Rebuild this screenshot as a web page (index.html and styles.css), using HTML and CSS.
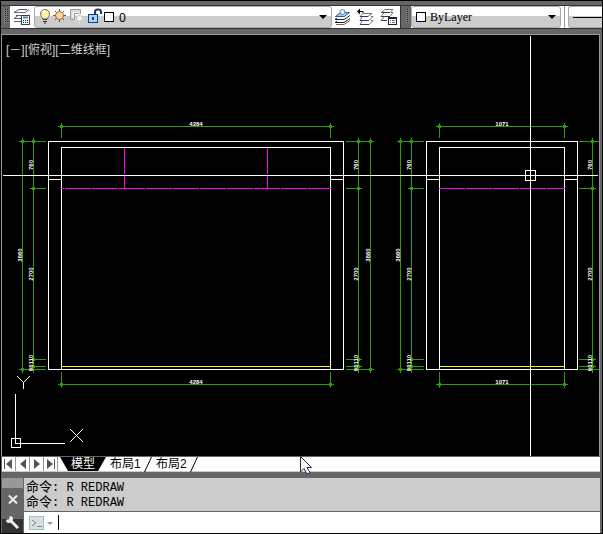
FILE: index.html
```html
<!DOCTYPE html>
<html lang="zh-CN">
<head>
    <meta charset="UTF-8">
    <meta name="viewport" content="width=device-width, initial-scale=1.0">
    <title>CAD</title>
    <link rel="stylesheet" href="styles.css">
</head>
<body>
    <div class="app">
        <div class="toolbar">
            <div class="grip"></div>
            <div class="tools">
                <button class="tool" type="button" aria-label="图层特性">
                    <svg width="18" height="18" viewBox="0 0 18 18" fill="none">
                        <path d="M6 1.5h8M4 4.5h8M3 7.5h5M3 10.5h5M3 13.5h5" stroke="#4b4f78"/>
                        <path d="M6 1.5l-5 3h11l4-3M8 7.500h-3l-4 3h6M1 13.500h6" stroke="#666"/>
                        <rect x="8.500" y="7.500" width="8" height="9" fill="#fff" stroke="#345"/>
                        <path d="M10 9.500h5" stroke="#3c82c8" stroke-width="2"/>
                        <path d="M10 12.500h1m1 0h1m1 0h1M10 14.500h1m1 0h1m1 0h1" stroke="#222"/>
                    </svg>
                </button>
            </div>
            <div class="combo combo-layer">
                <svg width="76" height="18" viewBox="0 0 76 18" fill="none">
                    <path d="M1.500 6a4.500 4.500 0 0 1 9 0c0 2-2 3-2 5h-5c0-2-2-3-2-5z" fill="#fff3a0" stroke="#776655"/>
                    <path d="M4 4l2-1" stroke="#fff" stroke-width="2"/>
                    <path d="M4 11.500h4M4 13.500h4M5 15h2" stroke="#334"/>
                    <path d="M20.500 1v13M14 7.500h13M16 3l9 9M25 3l-9 9" stroke="#555"/>
                    <circle cx="20.500" cy="7.500" r="4" fill="#ffd39b" stroke="#a86424"/>
                    <path d="M31.500 1.500h10v4h-6v6h-4z" fill="#ddd" stroke="#999"/>
                    <path d="M34 4.500h5M34 5v4" stroke="#fff"/>
                    <path d="M40.500 5v10M36 10.500h9M37 7l7 7M44 7l-7 7" stroke="#eee"/>
                    <circle cx="40.500" cy="10.500" r="3" fill="#f6f6f6" stroke="#bbb"/>
                    <path d="M56 7V4q0-2.500 2.500-2.500h1Q62 1.500 62 4v2" stroke="#1c3f66" stroke-width="2"/>
                    <rect x="49.500" y="6.500" width="9" height="8" fill="#a9d2ff" stroke="#123f82"/>
                    <path d="M54 9v3" stroke="#123f82" stroke-width="2"/>
                    <rect x="65.500" y="4.500" width="9" height="9" fill="#fff" stroke="#000"/>
                </svg>
                <select class="combo-select layer-name" aria-label="图层">
                    <option>0</option>
                </select>
                <span class="arrow"></span>
            </div>
            <div class="tools tools-wide">
                <button class="tool" type="button" aria-label="置为当前">
                    <svg width="18" height="18" viewBox="0 0 18 18" fill="none">
                        <path d="M1 14.500h9l6-4M1 11.500h9l6-4M3 10l-2 1.500M3 13l-2 1.500" stroke="#222"/>
                        <path d="M1.500 8.500l5-4h9l-5 4z" fill="#9bc8f5" stroke="#1f5fae"/>
                        <circle cx="8.500" cy="4" r="2.500" fill="#e4f0f4" stroke="#789"/>
                        <path d="M2 16.500h8l6-4" stroke="#666"/>
                    </svg>
                </button>
                <button class="tool" type="button" aria-label="上一个图层">
                    <svg width="18" height="18" viewBox="0 0 18 18" fill="none">
                        <path d="M1 3.500h5" stroke="#000"/>
                        <path d="M0 3.500l3-3v6z" fill="#000"/>
                        <path d="M5 3.500h1v2" stroke="#000"/>
                        <path d="M3 8.500l3-3h9l-4 3zM12 12.500l4-4h-2M12 16.500l4-4h-2M5 9l-2 3.500M5 13l-2 3.500" stroke="#777"/>
                        <path d="M3 8.500h8M3 12.500h9M3 16.500h9" stroke="#33386f"/>
                    </svg>
                </button>
                <button class="tool" type="button" aria-label="图层状态">
                    <svg width="18" height="18" viewBox="0 0 18 18" fill="none">
                        <path d="M1 4.500l4-3h8l-3 3zM10 8.500l3-4h-2M4 5l-3 3.500M4 9l-3 3.500" stroke="#777"/>
                        <path d="M1 4.500h9M1 8.500h9M1 12.500h6" stroke="#33386f"/>
                        <rect x="8.500" y="9.500" width="8" height="7" fill="#fff" stroke="#222"/>
                        <path d="M8 10h9" stroke="#222" stroke-width="2"/>
                        <path d="M10 12.500h1m1 0h3M10 14.500h1m1 0h3" stroke="#5f73ad"/>
                    </svg>
                </button>
            </div>
            <div class="grip grip-second"></div>
            <div class="combo combo-color">
                <span class="swatch"></span>
                <select class="combo-select" aria-label="颜色">
                    <option>ByLayer</option>
                </select>
                <span class="arrow"></span>
            </div>
            <div class="divider"></div>
            <div class="combo combo-line">
                <span class="line-sample"></span>
            </div>
        </div>

        <div class="viewport">
            <div class="view-label">[－][俯视][二维线框]</div>
            <svg class="drawing" fill="none" shape-rendering="crispEdges">
                <defs>
                    <g id="tick">
                        <path d="M-3 .5h7M.5-3v7"/>
                        <path class="tick-dot" d="M-1-1h3v3h-3z"/>
                    </g>
                </defs>
                <g transform="translate(-3 -35)">
                    <!-- front elevation -->
                    <g class="dim">
                        <path d="M61.500 126.500h269M61.500 123v15M330.500 123v15"/>
                        <path d="M61.500 384.500h269M61.500 372v15M330.500 372v15"/>
                        <path d="M22.500 139v233M33.500 139v234M20 141.500h26M31 188.500h15M31 359.500h15M31 366.500h15M20 369.500h26"/>
                        <path d="M358.500 139v234M370.500 139v233M346 141.500h26M346 188.500h15M346 359.500h15M346 366.500h15M346 369.500h26"/>
                        <use href="#tick" x="61" y="126"/><use href="#tick" x="330" y="126"/>
                        <use href="#tick" x="61" y="384"/><use href="#tick" x="330" y="384"/>
                        <use href="#tick" x="22" y="141"/><use href="#tick" x="33" y="141"/>
                        <use href="#tick" x="33" y="188"/><use href="#tick" x="33" y="359"/>
                        <use href="#tick" x="33" y="366"/><use href="#tick" x="22" y="369"/>
                        <use href="#tick" x="358" y="141"/><use href="#tick" x="370" y="141"/>
                        <use href="#tick" x="358" y="188"/><use href="#tick" x="358" y="359"/>
                        <use href="#tick" x="358" y="366"/><use href="#tick" x="370" y="369"/>
                    </g>
                    <path class="wall" d="M48.500 369.500v-228h295v228zM61.500 369v-221.500h269v221.500M48 179.500h13M330 179.500h13"/>
                    <path class="shelf" d="M65 188.500h266"/>
                    <path class="shelf" d="M61 188.500h3M124.500 148v40M267.500 148v40"/>
                    <path class="floor" d="M62 366.500h268"/>

                    <!-- side elevation -->
                    <g class="dim">
                        <path d="M439.500 126.500h125M439.500 123v15M564.500 123v15"/>
                        <path d="M439.500 384.500h125M439.500 372v15M564.500 372v15"/>
                        <path d="M400.500 139v233M411.500 139v234M398 141.500h26M409 188.500h15M409 359.500h15M409 366.500h15M398 369.500h26"/>
                        <path d="M592.500 139v234M579 141.500h20M579 188.500h16M579 359.500h16M579 366.500h16M579 369.500h20"/>
                        <use href="#tick" x="439" y="126"/><use href="#tick" x="564" y="126"/>
                        <use href="#tick" x="439" y="384"/><use href="#tick" x="564" y="384"/>
                        <use href="#tick" x="400" y="141"/><use href="#tick" x="411" y="141"/>
                        <use href="#tick" x="411" y="188"/><use href="#tick" x="411" y="359"/>
                        <use href="#tick" x="411" y="366"/><use href="#tick" x="400" y="369"/>
                        <use href="#tick" x="592" y="141"/><use href="#tick" x="592" y="188"/>
                        <use href="#tick" x="592" y="359"/><use href="#tick" x="592" y="366"/>
                    </g>
                    <path class="wall" d="M426.500 369.500v-228h151v228zM439.500 369v-221.500h125v221.500M426 179.500h13M564 179.500h13"/>
                    <path class="shelf" d="M439 188.500h126"/>
                    <path class="floor" d="M440 366.500h124"/>

                    <g class="dim-text">
                        <text x="196" y="126">4284</text>
                        <text x="196" y="384">4284</text>
                        <text x="502" y="126">1071</text>
                        <text x="502" y="384">1071</text>
                        <text transform="translate(33 165) rotate(-90)">760</text>
                        <text transform="translate(22 255) rotate(-90)">3660</text>
                        <text transform="translate(33 274) rotate(-90)">2700</text>
                        <text transform="translate(33 363) rotate(-90)">90110</text>
                        <text transform="translate(358 165) rotate(-90)">760</text>
                        <text transform="translate(370 255) rotate(-90)">3660</text>
                        <text transform="translate(358 274) rotate(-90)">2700</text>
                        <text transform="translate(358 363) rotate(-90)">90110</text>
                        <text transform="translate(411 165) rotate(-90)">760</text>
                        <text transform="translate(400 255) rotate(-90)">3660</text>
                        <text transform="translate(411 274) rotate(-90)">2700</text>
                        <text transform="translate(411 363) rotate(-90)">90110</text>
                        <text transform="translate(592 165) rotate(-90)">760</text>
                        <text transform="translate(592 274) rotate(-90)">2700</text>
                        <text transform="translate(592 363) rotate(-90)">90110</text>
                    </g>

                    <!-- UCS icon -->
                    <path class="wall" d="M15.500 394v49.500h49.500M11.500 438.500h9v9h-9z"/>
                    <path class="wall" d="M17 376l6.500 6.500l6.500-6.500M23.500 382v7M70 429l13 13M83 429l-13 13"/>

                    <!-- crosshair -->
                    <path class="wall" d="M3 175.500h595M530.500 36v420M525.500 170.500h10v10h-10z"/>
                </g>
            </svg>
        </div>

        <div class="tabs">
            <button class="nav" type="button" aria-label="第一个"><svg width="9" height="10" viewBox="0 0 9 10"><path d="M0 0h1v10H0zM8 0v10L2 5z"/></svg></button>
            <button class="nav" type="button" aria-label="上一个"><svg width="6" height="10" viewBox="0 0 6 10"><path d="M6 0v10L0 5z"/></svg></button>
            <button class="nav" type="button" aria-label="下一个"><svg width="6" height="10" viewBox="0 0 6 10"><path d="M0 0v10l6-5z"/></svg></button>
            <button class="nav" type="button" aria-label="最后一个"><svg width="9" height="10" viewBox="0 0 9 10"><path d="M8 0h1v10H8zM1 0v10l6-5z"/></svg></button>
            <button class="tab tab-active" type="button">模型</button>
            <button class="tab" type="button">布局1<svg class="slant" width="8" height="15" viewBox="0 0 8 15"><path d="M7.500 0l-7 15" stroke="#000"/></svg></button>
            <button class="tab" type="button">布局2<svg class="slant" width="8" height="15" viewBox="0 0 8 15"><path d="M7.500 0l-7 15" stroke="#000"/></svg></button>
            <svg class="pointer" width="13" height="19" viewBox="0 0 13 19">
                <path d="M.5.500v15.500l3.500-3.500l3 5.500l3-1.500l-3-5h4.500z" fill="#fff" stroke="#26264f"/>
            </svg>
        </div>

        <div class="command">
            <div class="command-side">
                <div class="side-handle"></div>
                <button class="side-button" type="button" aria-label="关闭">
                    <svg width="10" height="9" viewBox="0 0 10 9"><path d="M1 .5l8 8M9 .5l-8 8" stroke="#eee" stroke-width="2"/></svg>
                </button>
                <button class="side-button side-options" type="button" aria-label="自定义">
                    <svg width="15" height="15" viewBox="0 0 15 15" fill="none">
                        <path d="M6 6l7 7" stroke="#eee" stroke-width="3"/>
                        <path d="M5 1L3.500 4L1 5q0 3 3 3q4-1 4-4q0-3-3-3" fill="#eee"/>
                        <path d="M1 1l3 3" stroke="#666" stroke-width="2"/>
                    </svg>
                </button>
            </div>
            <div class="command-main">
                <div class="history">
                    <div class="history-line"><span class="prompt">命令</span>: R REDRAW</div>
                    <div class="history-line"><span class="prompt">命令</span>: R REDRAW</div>
                </div>
                <div class="entry">
                    <button class="recent" type="button" aria-label="最近使用的命令">
                        <svg width="24" height="14" viewBox="0 0 24 14" fill="none">
                            <rect x=".5" y=".5" width="14" height="13" fill="#ddd" stroke="#8fc9cc"/>
                            <path d="M3 4l4 3l-4 3M8 10.500h5" stroke="#789"/>
                            <path d="M18 6h6l-3 3z" fill="#999"/>
                        </svg>
                    </button>
                    <span class="caret"></span>
                    <input class="entry-input" type="text" aria-label="命令行">
                </div>
            </div>
        </div>
    </div>
</body>
</html>
```

FILE: styles.css
```css
* {
    box-sizing: border-box;
}

body {
    margin: 0;
    background: #000;
    font-family: "Liberation Sans", "Noto Sans CJK SC", sans-serif;
    font-size: 12px;
    color: #000;
}

button {
    padding: 0;
    border: 0;
    background: none;
    font: inherit;
    color: inherit;
}

svg {
    display: block;
    flex: none;
}

.app {
    display: flex;
    flex-direction: column;
    height: 100vh;
    border: 1px solid #000;
    background: #666;
    overflow: hidden;
}

/* toolbar */
.toolbar {
    display: flex;
    flex: none;
    height: 24px;
    margin: 4px 0 5px;
    border-top: 1px solid #333;
    border-bottom: 1px solid #333;
    background: #fff;
    overflow: hidden;
}

.grip {
    flex: none;
    width: 9px;
    padding: 3px 2px 5px 3px;
    background: conic-gradient(#222 25%, #777 0) 0 0 / 2px 2px content-box content-box, #666;
}

.grip-second {
    width: 11px;
    padding-left: 5px;
    border-left: 1px solid #333;
}

.tools {
    display: flex;
    align-items: center;
    justify-content: space-around;
    flex: none;
    width: 24px;
}

.tools-wide {
    width: 68px;
}

.combo {
    display: flex;
    align-items: center;
    flex: none;
    min-width: 0;
    height: 22px;
    padding: 0 4px;
    border: 1px solid #aaa;
    border-radius: 3px;
    background: linear-gradient(#fff 45%, #ccc 45%);
}

.combo-layer {
    flex: 1;
}

.combo-color {
    width: 150px;
}

.combo-line {
    width: 34px;
    border-right: 0;
    border-radius: 3px 0 0 3px;
    padding-right: 0;
}

.combo-select {
    flex: 1;
    min-width: 0;
    height: 18px;
    padding: 0 4px;
    border: 0;
    appearance: none;
    background: transparent;
    font-family: "Liberation Serif", serif;
    font-size: 12px;
    color: #000;
}

.layer-name {
    font-family: "Noto Sans", sans-serif;
}

.arrow {
    flex: none;
    border: 4px solid transparent;
    border-top-color: #000;
    border-bottom: 0;
}

.swatch {
    width: 10px;
    height: 10px;
    border: 1px solid #000;
    background: #fff;
}

.divider {
    flex: none;
    width: 7px;
    border: solid #fff;
    border-width: 0 3px;
    background: #999;
}

.line-sample {
    flex: 1;
    height: 1px;
    background: #000;
}

/* drawing area */
.viewport {
    position: relative;
    flex: 1;
    min-height: 0;
    margin-right: 2px;
    border: solid #999;
    border-width: 1px 1px 0;
    background: #000;
    overflow: hidden;
}

.drawing {
    width: 100%;
    height: 100%;
    padding-left: 1px;
}

.view-label {
    position: absolute;
    left: 4px;
    top: 6px;
    line-height: 18px;
    color: #ccc;
}

.wall {
    stroke: #fff;
}

.dim {
    stroke: #2f9a0a;
}

.tick-dot {
    fill: #2f9a0a;
    stroke: none;
}

.shelf {
    stroke: #f0f;
    stroke-dasharray: 26 1;
}

.floor {
    stroke: #ff0;
}

.dim-text {
    fill: #fff;
    font-family: "Liberation Sans Narrow", "Liberation Sans", sans-serif;
    font-size: 6px;
    font-weight: bold;
    text-anchor: middle;
}

/* layout tabs */
.tabs {
    position: relative;
    display: flex;
    flex: none;
    height: 16px;
    margin: 0 2px 0 1px;
    border-top: 1px solid #666;
    border-bottom: 1px solid #ccc;
    background: #fff;
}

.nav {
    display: flex;
    align-items: center;
    justify-content: center;
    width: 14px;
    border-right: 1px solid #999;
    fill: #555;
}

.tab {
    display: flex;
    align-items: center;
    width: 46px;
    padding-left: 4px;
    line-height: 14px;
}

.slant {
    margin-left: auto;
}

.tab-active {
    justify-content: center;
    margin-left: 2px;
    padding: 0;
    background: #000;
    color: #fff;
    clip-path: polygon(0 0, 100% 0, 38px 100%, 8px 100%);
}

.pointer {
    position: absolute;
    left: 298px;
    top: -1px;
    z-index: 1;
}

/* command line */
.command {
    display: flex;
    flex: none;
    margin: 6px 2px 0 1px;
}

.command-side {
    display: flex;
    flex-direction: column;
    width: 22px;
}

.side-handle {
    height: 10px;
    margin-right: 1px;
    background: #999;
}

.side-button {
    display: flex;
    align-items: center;
    justify-content: center;
    flex: 1;
}

.side-options {
    flex: none;
    height: 22px;
    margin-right: 1px;
    background: linear-gradient(#666 35%, #333 35%);
}

.command-main {
    flex: 1;
    min-width: 0;
}

.history {
    padding: 2px 2px 1px;
    border-bottom: 1px solid #666;
    background: #ccc;
}

.history-line {
    height: 15px;
    line-height: 15px;
    font-family: "Liberation Mono", "Noto Sans CJK SC", monospace;
    font-size: 12px;
    white-space: pre;
}

.prompt {
    font-size: 13px;
}

.entry {
    display: flex;
    align-items: center;
    height: 21px;
    padding-left: 5px;
    background: #fff;
}

.caret {
    width: 1px;
    height: 15px;
    margin-left: 5px;
    background: #000;
}

.entry-input {
    flex: 1;
    min-width: 0;
    height: 19px;
    border: 0;
    outline: 0;
    font-family: "Liberation Mono", monospace;
    font-size: 12px;
}
```
